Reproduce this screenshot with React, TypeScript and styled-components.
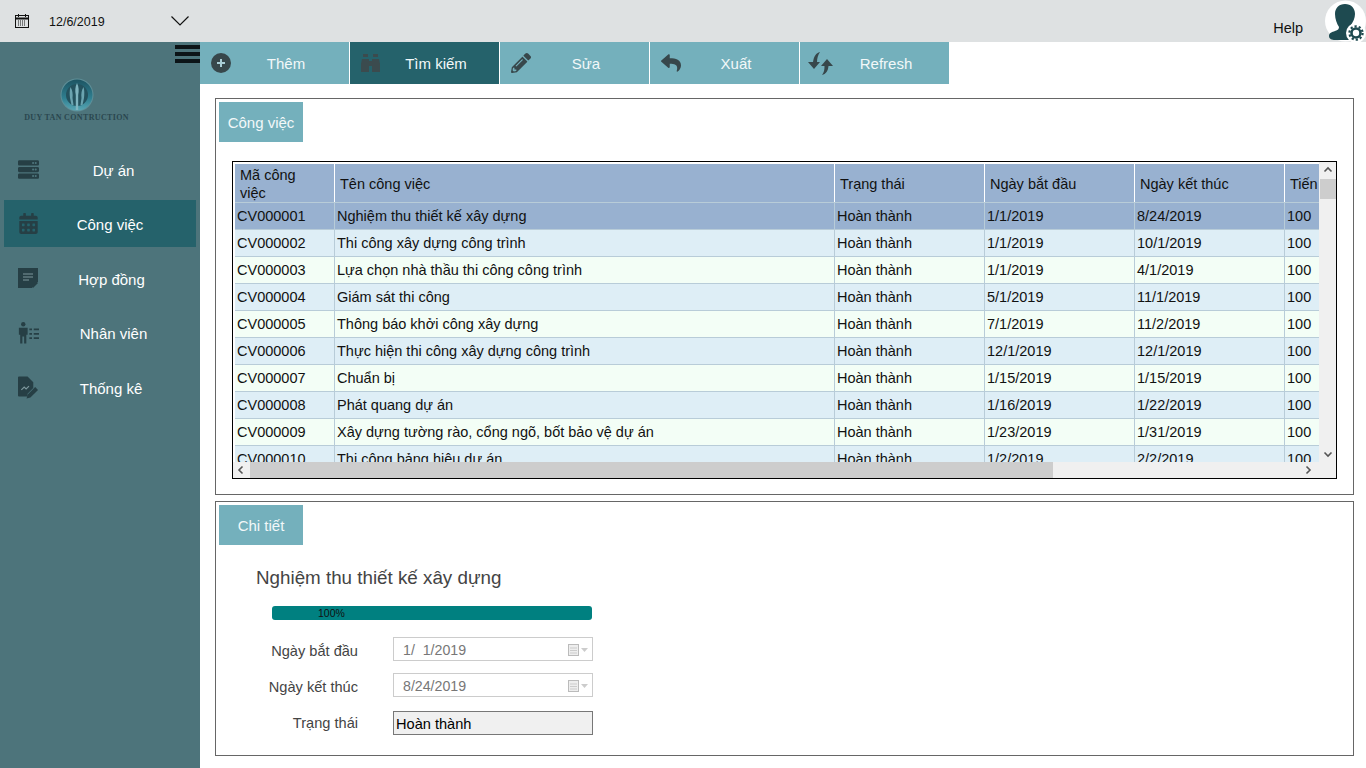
import React from "react";
import styled, { createGlobalStyle } from "styled-components";
import { FaPencilAlt, FaReply, FaServer, FaCalendarAlt } from "react-icons/fa";

const colors = {
  top: "#dee1e2",
  side: "#4d747b",
  tool: "#74b0bc",
  active: "#25626b",
  iconDark: "#37474b",
  sideIcon: "#263f45",
  header: "#98b1d0",
  even: "#deeef6",
  odd: "#f3fef6",
  line: "#b8ccd8",
};

const GlobalStyle = createGlobalStyle`
  html, body { margin: 0; padding: 0; background: #fff; }
  body { font-family: "Liberation Sans", Arial, sans-serif; overflow: hidden; }
`;

const Shell = styled.div`
  display: grid;
  grid-template-columns: 200px 1fr;
  grid-template-rows: 42px 1fr;
  width: 1366px;
  height: 768px;
  overflow: hidden;
`;

const TopBar = styled.header`
  grid-column: 1 / 3;
  display: flex;
  align-items: center;
  background: ${colors.top};
  padding-left: 15px;
  color: #111;
`;

const TopDate = styled.span`
  font-size: 12.5px;
  margin: 1px 0 0 20px;
  width: 122px;
`;

const Help = styled.span`
  font-size: 14.5px;
  margin-left: auto;
  margin-top: 14px;
  margin-right: 22px;
`;

const Avatar = styled.svg`
  width: 41px;
  height: 42px;
  display: block;
`;

const Sidebar = styled.aside`
  position: relative;
  background: ${colors.side};
  padding: 0 4px;
`;

const Burger = styled.div`
  position: absolute;
  top: 3px;
  right: 0;
  width: 25px;
  height: 18px;
  display: flex;
  flex-direction: column;
  justify-content: space-between;
`;

const BurgerBar = styled.span`
  height: 4px;
  background: #0c1417;
`;

const LogoBox = styled.div`
  display: flex;
  flex-direction: column;
  align-items: center;
  width: 145px;
  padding-top: 36px;
  height: 103px;
  box-sizing: border-box;
`;

const LogoText = styled.span`
  font-family: "Liberation Serif", serif;
  font-weight: bold;
  font-size: 8px;
  letter-spacing: 0.35px;
  white-space: nowrap;
  color: #2a474f;
  margin-top: 1px;
`;

const SideNav = styled.nav`
  display: flex;
  flex-direction: column;
  gap: 7.5px;
`;

const SideItem = styled.div<{ $active?: boolean }>`
  display: flex;
  align-items: center;
  height: 47px;
  padding: 3px 17px 0 14px;
  box-sizing: border-box;
  color: #fff;
  font-size: 15px;
  background: ${(p) => (p.$active ? colors.active : "transparent")};
`;

const SideIcon = styled.span`
  display: flex;
  width: 21px;
  margin-top: -2px;
  color: ${colors.sideIcon};
  font-size: 21px;
`;

const SideLabel = styled.span<{ $shift: number }>`
  flex: 1;
  text-align: center;
  padding-left: ${(p) => p.$shift}px;
`;

const Main = styled.main`
  display: flex;
  flex-direction: column;
  min-width: 0;
`;

const Toolbar = styled.div`
  display: flex;
  gap: 1px;
  height: 42px;
`;

const ToolButton = styled.div<{ $active?: boolean }>`
  display: flex;
  align-items: center;
  width: 149px;
  padding: 0 9px 0 11px;
  box-sizing: border-box;
  background: ${(p) => (p.$active ? colors.active : colors.tool)};
  color: #f2f8f9;
  font-size: 15px;
`;

const ToolIcon = styled.span`
  display: flex;
  width: 21px;
  color: ${colors.iconDark};
  font-size: 20px;
`;

const ToolLabel = styled.span`
  flex: 1;
  text-align: center;
`;

const RefreshSvg = styled.svg`
  flex: none;
  margin-left: -3px;
`;

const Content = styled.div`
  display: flex;
  flex-direction: column;
  gap: 6px;
  padding: 14px 12px 12px 15px;
`;

const Panel = styled.section<{ $height: number }>`
  height: ${(p) => p.$height}px;
  box-sizing: border-box;
  border: 1px solid #666;
  padding: 3px;
`;

const PanelTab = styled.div`
  width: 84px;
  height: 40px;
  display: flex;
  align-items: center;
  justify-content: center;
  background: ${colors.tool};
  color: #f2f8f9;
  font-size: 15px;
`;

const GridFrame = styled.div`
  display: grid;
  grid-template-columns: 1fr 17px;
  grid-template-rows: 1fr 16px;
  width: 1105px;
  height: 318px;
  margin: 19px 0 0 13px;
  box-sizing: border-box;
  border: 1px solid #000;
  background: #f0f0f0;
`;

const GridView = styled.div`
  overflow: hidden;
  background: #fff;
  padding: 2px 0 0 2px;
  font-size: 14.5px;
  color: #111;
`;

const GridRow = styled.div<{ $bg: string; $height: number }>`
  display: grid;
  grid-template-columns: 100px 500px 150px 150px 150px 60px;
  width: 1110px;
  height: ${(p) => p.$height}px;
  background: ${(p) => p.$bg};
  box-sizing: border-box;
  border-bottom: 1px solid ${colors.line};
`;

const HeadCell = styled.div`
  display: flex;
  align-items: center;
  padding: 2px 0 0 5px;
  border-right: 1px solid #fff;
  line-height: 18px;
  white-space: pre-line;
  overflow: hidden;
`;

const Cell = styled.div`
  display: flex;
  align-items: center;
  padding-left: 2px;
  border-right: 1px solid ${colors.line};
  white-space: nowrap;
  overflow: hidden;
`;

const VScroll = styled.div`
  display: flex;
  flex-direction: column;
  align-items: center;
  background: #f0f0f0;
  padding-top: 3px;
`;

const VThumb = styled.div`
  width: 16px;
  height: 20px;
  margin-top: 4px;
  background: #cdcdcd;
`;

const ScrollArrow = styled.svg<{ $push?: boolean }>`
  width: 10px;
  height: 10px;
  flex: none;
  margin-top: ${(p) => (p.$push ? "auto" : "0")};
  margin-bottom: ${(p) => (p.$push ? "3px" : "0")};
`;

const HScroll = styled.div`
  display: flex;
  align-items: center;
  background: #f0f0f0;
`;

const HThumb = styled.div`
  width: 803px;
  height: 100%;
  margin-left: 17px;
  background: #cdcdcd;
`;

const HArrow = styled.svg<{ $left?: boolean }>`
  width: 10px;
  height: 10px;
  flex: none;
  margin-left: ${(p) => (p.$left ? "3px" : "auto")};
  margin-right: ${(p) => (p.$left ? "-13px" : "6px")};
`;

const Corner = styled.div`
  background: #f0f0f0;
`;

const DetailTitle = styled.h2`
  margin: 22px 0 0 37px;
  font-weight: normal;
  font-size: 18.8px;
  line-height: 22px;
  color: #444;
`;

const Progress = styled.div`
  position: relative;
  width: 320px;
  height: 14px;
  margin: 17px 0 0 53px;
  border-radius: 3px;
  background: #008080;
`;

const ProgressText = styled.span`
  position: absolute;
  left: 46px;
  top: 1px;
  font-size: 10.5px;
  line-height: 13px;
  color: #111;
`;

const Form = styled.div`
  display: grid;
  grid-template-columns: 139px 200px;
  column-gap: 35px;
  row-gap: 12px;
  margin-top: 17px;
  font-size: 14.6px;
`;

const FieldLabel = styled.label<{ $up?: boolean }>`
  align-self: center;
  text-align: right;
  color: #444;
  padding-top: ${(p) => (p.$up ? "0" : "4px")};
  margin-top: ${(p) => (p.$up ? "2px" : "0")};
`;

const DateBox = styled.div`
  display: flex;
  align-items: center;
  height: 24px;
  box-sizing: border-box;
  border: 1px solid #ccc;
  padding: 1px 4px 0 9px;
  color: #777;
  font-size: 14.2px;
  white-space: pre;
`;

const DateIcon = styled.svg`
  width: 20px;
  height: 12px;
  margin-left: auto;
`;

const StatusBox = styled.div`
  display: flex;
  align-items: center;
  height: 24px;
  margin-top: 2px;
  padding: 1px 0 0 2px;
  box-sizing: border-box;
  border: 1px solid #777;
  background: #f0f0f0;
  color: #000;
  font-size: 14.6px;
`;

function CalendarSmall() {
  return (
    <svg width="14" height="14" viewBox="0 0 14 14" fill="none" stroke="#111">
      <rect x="0.5" y="1.5" width="13" height="12" />
      <path d="M0.5 4.5h13" strokeWidth="2" />
      <path d="M3.5 0v3M10.5 0v3" />
      <path d="M3 7h8M3 9h8M3 11h8" strokeDasharray="1 1" />
    </svg>
  );
}

function Chevron() {
  return (
    <svg width="18" height="10" viewBox="0 0 18 10" fill="none" stroke="#111" strokeWidth="1.2">
      <path d="M0.5 0.5L9 9L17.5 0.5" />
    </svg>
  );
}

function AvatarIcon() {
  return (
    <Avatar viewBox="0 0 41 42">
      <circle cx="20.5" cy="21" r="20.5" fill="#fff" />
      <path
        d="M10 14C10 8 14 4 20 4s10 4 10 10c0 4-2 8-4 11-1 2 0 3 2 4l5 3-5 8H10c-3 0-6-1-6-4 0-3 3-4 6-5 3-1 4-2 4-4-2-3-4-8-4-13z"
        fill="#1e4a50"
      />
      <circle cx="31" cy="33" r="10" fill="#fff" />
      <circle cx="31" cy="33" r="4.5" fill="none" stroke="#1e4a50" strokeWidth="2.6" />
      <circle cx="31" cy="33" r="6.6" fill="none" stroke="#1e4a50" strokeWidth="2.2" strokeDasharray="2.2 2" />
    </Avatar>
  );
}

function LogoMark() {
  return (
    <svg width="34" height="34" viewBox="0 0 34 34">
      <defs>
        <linearGradient id="logoRing" x1="0" y1="0" x2="0" y2="1">
          <stop offset="0" stopColor="#1d5462" />
          <stop offset="0.6" stopColor="#2f7f90" />
          <stop offset="1" stopColor="#58a6b4" />
        </linearGradient>
      </defs>
      <circle cx="17" cy="17" r="16.500" fill="#5f8f98" />
      <circle cx="17" cy="17" r="15.500" fill="url(#logoRing)" />
      <circle cx="17" cy="17" r="11" fill="#24525e" />
      <path d="M17 5c2 4 2 8 1.200 12v15h-2.400V17C15 13 15 9 17 5z" fill="#7fb4bf" />
      <path d="M10.500 9c2 3 2.500 7 2 11l1 7h-2l-1.500-7c-.5-4-.5-8 .5-11z" fill="#6aa3af" />
      <path d="M23.500 9c-2 3-2.500 7-2 11l-1 7h2l1.500-7c.5-4 .5-8-.5-11z" fill="#6aa3af" />
    </svg>
  );
}

function PlusIcon() {
  return (
    <svg width="20" height="20" viewBox="0 0 20 20">
      <circle cx="10" cy="10" r="10" fill={colors.iconDark} />
      <path d="M6 10h8M10 6v8" stroke="#a9cdd5" strokeWidth="2" />
    </svg>
  );
}

function BinocularsIcon() {
  return (
    <svg width="20" height="20" viewBox="0 0 20 20" fill="#3b4b4e">
      <path d="M2 1h5v3H2zM12 1h5v3h-5z" />
      <path d="M1 6h7v2h3V6h7l1 5v8h-8v-6H8v6H0v-8z" />
    </svg>
  );
}

function RefreshIcon() {
  return (
    <RefreshSvg width="25" height="23" viewBox="0 0 25 23" fill={colors.iconDark}>
      <path d="M12 0C8 1 6 4 5 10H0l6 7 6-7H9c0-4 1-7 3-10z" />
      <path d="M14 23c4-1 6-4 6.500-9H25l-6-7-6 7h3.500c0 4-.5 6-2.500 9z" />
    </RefreshSvg>
  );
}

function NoteIcon() {
  return (
    <svg width="21" height="21" viewBox="0 0 21 21" fill={colors.sideIcon}>
      <path d="M0 0h20v14l-6 6H0z" />
      <path d="M15 20v-5h5z" />
      <path d="M5 6h10M5 9h10M5 12h6" stroke="#7d979c" strokeWidth="1" />
    </svg>
  );
}

function StaffIcon() {
  return (
    <svg width="24" height="25" viewBox="0 0 24 25" fill={colors.sideIcon}>
      <circle cx="6" cy="3" r="2.500" />
      <path d="M1 7h10v8H9.500v10H7v-8H5v8H2.500V15H1z" />
      <path d="M13 8h3v2h-3zM18 8h6v2h-6zM13 13h3v2h-3zM18 13h6v2h-6zM13 18h3v2h-3zM18 18h6v2h-6z" />
    </svg>
  );
}

function ReportIcon() {
  return (
    <svg width="22" height="23" viewBox="0 0 22 23" fill={colors.sideIcon}>
      <path d="M1 0h9l6 6v6l-6 6v3H1a1 1 0 0 1-1-1V1a1 1 0 0 1 1-1z" />
      <path d="M3.500 14l3-3 2 2 3-3" fill="none" stroke="#7d979c" strokeWidth="1.200" />
      <path d="M18 11l3 3-8 8-4 1 1-4z" />
    </svg>
  );
}

function SmallCal() {
  return (
    <DateIcon viewBox="0 0 20 12">
      <rect x="0.500" y="0.500" width="10" height="11" fill="#eee" stroke="#bbb" />
      <path d="M2 4h7M2 6.500h7M2 9h7" stroke="#ccc" />
      <path d="M13 4h7l-3.500 4z" fill="#ccc" />
    </DateIcon>
  );
}

const sideItems = [
  { label: "Dự án", icon: <FaServer />, shift: 9 },
  { label: "Công việc", icon: <FaCalendarAlt />, active: true, shift: 2 },
  { label: "Hợp đồng", icon: <NoteIcon />, shift: 5 },
  { label: "Nhân viên", icon: <StaffIcon />, shift: 9 },
  { label: "Thống kê", icon: <ReportIcon />, shift: 4 },
];

const toolItems = [
  { label: "Thêm", icon: <PlusIcon /> },
  { label: "Tìm kiếm", icon: <BinocularsIcon />, active: true },
  { label: "Sửa", icon: <FaPencilAlt /> },
  { label: "Xuất", icon: <FaReply /> },
  { label: "Refresh", icon: <RefreshIcon /> },
];

const heads = ["Mã công\nviệc", "Tên công việc", "Trạng thái", "Ngày bắt đầu", "Ngày kết thúc", "Tiến"];

const rows = [
  ["CV000001", "Nghiệm thu thiết kế xây dựng", "1/1/2019", "8/24/2019"],
  ["CV000002", "Thi công xây dựng công trình", "1/1/2019", "10/1/2019"],
  ["CV000003", "Lựa chọn nhà thầu thi công công trình", "1/1/2019", "4/1/2019"],
  ["CV000004", "Giám sát thi công", "5/1/2019", "11/1/2019"],
  ["CV000005", "Thông báo khởi công xây dựng", "7/1/2019", "11/2/2019"],
  ["CV000006", "Thực hiện thi công xây dựng công trình", "12/1/2019", "12/1/2019"],
  ["CV000007", "Chuẩn bị", "1/15/2019", "1/15/2019"],
  ["CV000008", "Phát quang dự án", "1/16/2019", "1/22/2019"],
  ["CV000009", "Xây dựng tường rào, cổng ngõ, bốt bảo vệ dự án", "1/23/2019", "1/31/2019"],
  ["CV000010", "Thi công bảng hiệu dự án", "1/2/2019", "2/2/2019"],
];

function rowColor(i: number) {
  if (i === 0) return colors.header;
  return i % 2 === 1 ? colors.even : colors.odd;
}

export default function App() {
  return (
    <Shell>
      <GlobalStyle />
      <TopBar>
        <CalendarSmall />
        <TopDate>12/6/2019</TopDate>
        <Chevron />
        <Help>Help</Help>
        <AvatarIcon />
      </TopBar>

      <Sidebar>
        <Burger>
          <BurgerBar />
          <BurgerBar />
          <BurgerBar />
        </Burger>
        <LogoBox>
          <LogoMark />
          <LogoText>DUY TAN CONTRUCTION</LogoText>
        </LogoBox>
        <SideNav>
          {sideItems.map((item) => (
            <SideItem key={item.label} $active={item.active}>
              <SideIcon>{item.icon}</SideIcon>
              <SideLabel $shift={item.shift}>{item.label}</SideLabel>
            </SideItem>
          ))}
        </SideNav>
      </Sidebar>

      <Main>
        <Toolbar>
          {toolItems.map((item) => (
            <ToolButton key={item.label} $active={item.active}>
              <ToolIcon>{item.icon}</ToolIcon>
              <ToolLabel>{item.label}</ToolLabel>
            </ToolButton>
          ))}
        </Toolbar>

        <Content>
          <Panel $height={397}>
            <PanelTab>Công việc</PanelTab>
            <GridFrame>
              <GridView>
                <GridRow $bg={colors.header} $height={39}>
                  {heads.map((h) => (
                    <HeadCell key={h}>{h}</HeadCell>
                  ))}
                </GridRow>
                {rows.map((r, i) => (
                  <GridRow key={r[0]} $bg={rowColor(i)} $height={27}>
                    <Cell>{r[0]}</Cell>
                    <Cell>{r[1]}</Cell>
                    <Cell>Hoàn thành</Cell>
                    <Cell>{r[2]}</Cell>
                    <Cell>{r[3]}</Cell>
                    <Cell>100</Cell>
                  </GridRow>
                ))}
              </GridView>
              <VScroll>
                <ScrollArrow viewBox="0 0 10 10">
                  <path d="M1.500 6.500L5 3l3.500 3.500" fill="none" stroke="#555" strokeWidth="1.600" />
                </ScrollArrow>
                <VThumb />
                <ScrollArrow $push viewBox="0 0 10 10">
                  <path d="M1.500 3.500L5 7l3.500-3.500" fill="none" stroke="#555" strokeWidth="1.600" />
                </ScrollArrow>
              </VScroll>
              <HScroll>
                <HArrow $left viewBox="0 0 10 10">
                  <path d="M6.500 1.500L3 5l3.500 3.500" fill="none" stroke="#555" strokeWidth="1.600" />
                </HArrow>
                <HThumb />
                <HArrow viewBox="0 0 10 10">
                  <path d="M3.500 1.500L7 5 3.500 8.500" fill="none" stroke="#555" strokeWidth="1.600" />
                </HArrow>
              </HScroll>
              <Corner />
            </GridFrame>
          </Panel>

          <Panel $height={255}>
            <PanelTab>Chi tiết</PanelTab>
            <DetailTitle>Nghiệm thu thiết kế xây dựng</DetailTitle>
            <Progress>
              <ProgressText>100%</ProgressText>
            </Progress>
            <Form>
              <FieldLabel>Ngày bắt đầu</FieldLabel>
              <DateBox>
                1/  1/2019
                <SmallCal />
              </DateBox>
              <FieldLabel>Ngày kết thúc</FieldLabel>
              <DateBox>
                8/24/2019
                <SmallCal />
              </DateBox>
              <FieldLabel $up>Trạng thái</FieldLabel>
              <StatusBox>Hoàn thành</StatusBox>
            </Form>
          </Panel>
        </Content>
      </Main>
    </Shell>
  );
}
